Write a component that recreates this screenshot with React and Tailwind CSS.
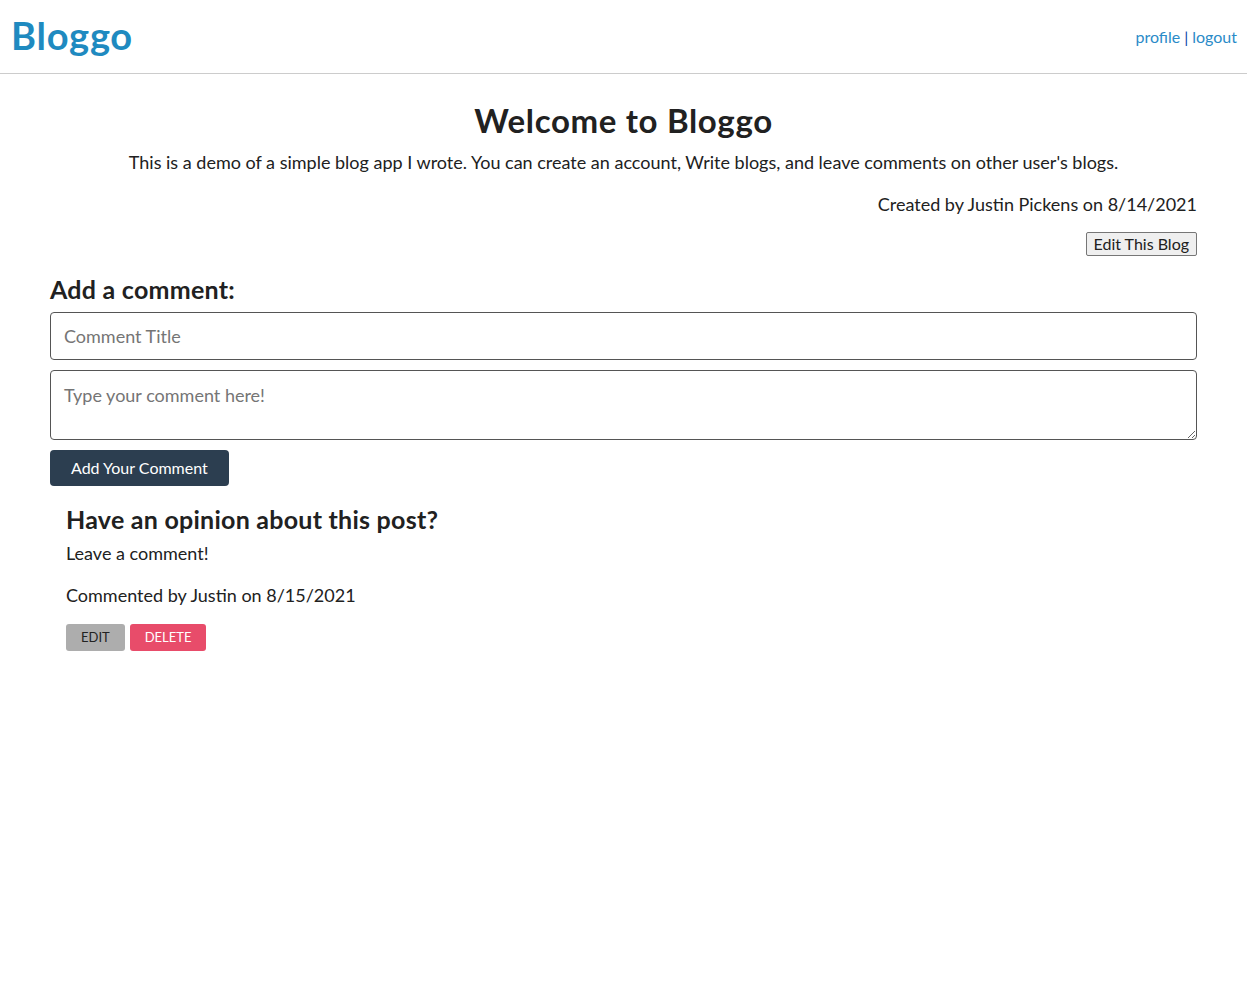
// App.jsx - Bloggo blog page
function App() {
  return (
    <div className="min-h-screen bg-white text-[#212121]" style={{ fontFamily: '"Lato", "Open Sans", sans-serif' }}>
      {/* Header */}
      <header className="h-[74px] flex items-center justify-between pl-[11px] pr-[10px] border-b border-[#cccccc]">
        <a href="#" className="text-[38px] font-bold tracking-[0.02em] text-[#1f8ac0] leading-none -mt-[3px]">Bloggo</a>
        <nav className="text-[16px] text-[#2a8bc8]">
          <a href="#" className="hover:underline">profile</a>
          <span className="text-[#0b3fa8] mx-[4px]">|</span>
          <a href="#" className="hover:underline">logout</a>
        </nav>
      </header>

      {/* Main */}
      <main className="px-[50px] pt-[26px]">
        <div className="text-center">
          <h1 className="text-[33px] font-bold tracking-[0.02em] leading-[40px]">Welcome to Bloggo</h1>
          <p className="text-[18px] leading-[26px] mt-[9px]">
            This is a demo of a simple blog app I wrote. You can create an account, Write blogs, and leave comments on other user's blogs.
          </p>
        </div>
        <p className="text-right text-[18px] leading-[26px] mt-[16px]">Created by Justin Pickens on 8/14/2021</p>
        <div className="flex justify-end mt-[15px]">
          <button className="h-[24px] px-[7px] text-[16px] leading-none bg-[#efefef] border border-[#767676] rounded-[2px]">
            Edit This Blog
          </button>
        </div>

        {/* Comment form */}
        <h2 className="text-[25px] font-bold tracking-[0.01em] leading-[30px] mt-[18px]">Add a comment:</h2>
        <form className="mt-[8px]" onSubmit={(e) => e.preventDefault()}>
          <input
            type="text"
            placeholder="Comment Title"
            className="block w-full h-[48px] px-[13px] text-[18px] border border-[#555555] rounded-[4px] placeholder:text-[#757575] outline-none"
          />
          <textarea
            placeholder="Type your comment here!"
            className="block w-full h-[70px] mt-[10px] px-[13px] py-[11px] text-[18px] border border-[#555555] rounded-[4px] placeholder:text-[#757575] outline-none"
          />
          <button className="mt-[10px] h-[36px] px-[21px] bg-[#2c3e50] text-white text-[16px] rounded-[4px]">
            Add Your Comment
          </button>
        </form>

        {/* Comments */}
        <div className="px-[16px] mt-[18px]">
          <h3 className="text-[25px] font-bold tracking-[0.01em] leading-[30px]">Have an opinion about this post?</h3>
          <p className="text-[18px] leading-[26px] mt-[6px]">Leave a comment!</p>
          <p className="text-[18px] leading-[26px] mt-[16px]">Commented by Justin on 8/15/2021</p>
          <div className="flex gap-[5px] mt-[16px]">
            <button className="h-[27px] px-[15px] bg-[#adadad] text-[#222222] text-[13px] rounded-[3px] uppercase">edit</button>
            <button className="h-[27px] px-[15px] bg-[#e84c6a] text-white text-[13px] rounded-[3px] uppercase">delete</button>
          </div>
        </div>
      </main>
    </div>
  );
}

export default App;
